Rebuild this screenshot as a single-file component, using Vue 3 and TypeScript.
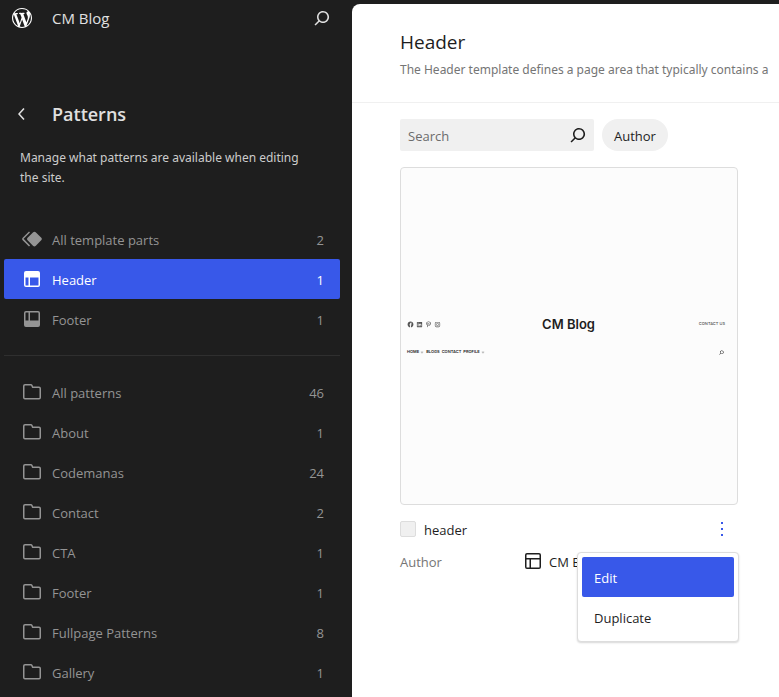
<script setup lang="ts">
import { ref } from 'vue'

interface NavItem {
  label: string
  count: number
  icon: string
  current?: boolean
}

const icons: Record<string, string> = {
  search:
    'M13 5c-3.3 0-6 2.7-6 6 0 1.4.5 2.7 1.3 3.7l-3.8 3.8 1.1 1.1 3.8-3.8c1 .8 2.3 1.3 3.7 1.3 3.3 0 6-2.7 6-6S16.3 5 13 5zm0 10.5c-2.5 0-4.5-2-4.5-4.5s2-4.5 4.5-4.5 4.5 2 4.5 4.5-2 4.5-4.5 4.5z',
  back: 'M14.6 7l-1.2-1L8 12l5.4 6 1.2-1-4.6-5z',
  symbol:
    'M21.3 10.8l-5.6-5.6c-.7-.7-1.8-.7-2.5 0l-5.6 5.6c-.7.7-.7 1.8 0 2.5l5.6 5.6c.3.3.8.5 1.2.5s.9-.2 1.2-.5l5.6-5.6c.8-.7.8-1.9.1-2.5zm-17.6 1L10 5.5l-1-1-6.3 6.3c-.7.7-.7 1.8 0 2.5L9 19.5l1.1-1.1-6.3-6.3c-.2 0-.2-.2-.1-.3z',
  header:
    'M18.5 10.5H10v8h8a.5.5 0 00.5-.5v-7.5zm-10 0h-3V18a.5.5 0 00.5.5h2.5v-8zM6 4a2 2 0 00-2 2v12a2 2 0 002 2h12a2 2 0 002-2V6a2 2 0 00-2-2H6z',
  footer:
    'M18 5.5h-8v8h8.5V6a.5.5 0 00-.5-.5zm-9.5 8h-3V6a.5.5 0 01.5-.5h2.5v8zM6 4a2 2 0 00-2 2v12a2 2 0 002 2h12a2 2 0 002-2V6a2 2 0 00-2-2H6z',
  layout:
    'M18 5.5H6a.5.5 0 00-.5.5v3h13V6a.5.5 0 00-.5-.5zm.5 5H10v8h8a.5.5 0 00.5-.5v-7.5zm-10 0h-3V18a.5.5 0 00.5.5h2.5v-8zM6 4h12a2 2 0 012 2v12a2 2 0 01-2 2H6a2 2 0 01-2-2V6a2 2 0 012-2z',
  folder:
    'M12.848 8a1 1 0 0 1-.914-.594l-.723-1.63a.5.5 0 0 0-.447-.276H5a.5.5 0 0 0-.5.5v11.5a.5.5 0 0 0 .5.5h14a.5.5 0 0 0 .5-.5v-9A.5.5 0 0 0 19 8h-6.152Zm.612-1.5a.5.5 0 0 1-.462-.31l-.445-1.084A2 2 0 0 0 10.763 4H5a2 2 0 0 0-2 2v11.5a2 2 0 0 0 2 2h14a2 2 0 0 0 2-2v-9a2 2 0 0 0-2-2h-5.54Z',
  more: 'M13 19h-2v-2h2v2zm0-6h-2v-2h2v2zm0-6h-2V5h2v2z',
}

const templateParts: NavItem[] = [
  { label: 'All template parts', count: 2, icon: 'symbol' },
  { label: 'Header', count: 1, icon: 'header', current: true },
  { label: 'Footer', count: 1, icon: 'footer' },
]

const patterns: NavItem[] = [
  { label: 'All patterns', count: 46, icon: 'folder' },
  { label: 'About', count: 1, icon: 'folder' },
  { label: 'Codemanas', count: 24, icon: 'folder' },
  { label: 'Contact', count: 2, icon: 'folder' },
  { label: 'CTA', count: 1, icon: 'folder' },
  { label: 'Footer', count: 1, icon: 'folder' },
  { label: 'Fullpage Patterns', count: 8, icon: 'folder' },
  { label: 'Gallery', count: 1, icon: 'folder' },
]

const groups = [templateParts, patterns]
const query = ref('')
const selected = ref(false)
</script>

<template>
  <div class="layout">
    <aside class="sidebar">
      <header class="site">
        <a class="icon-link" href="#" aria-label="Dashboard">
          <svg class="icon" viewBox="-2 -2 24 24">
            <path
              d="M20 10c0-5.51-4.49-10-10-10C4.48 0 0 4.49 0 10c0 5.52 4.48 10 10 10 5.51 0 10-4.48 10-10zM7.78 15.37L4.37 6.22c.55-.02 1.17-.08 1.17-.08.5-.06.44-1.13-.06-1.11 0 0-1.45.11-2.37.11-.18 0-.37 0-.58-.01C4.12 2.69 6.87 1.11 10 1.11c2.33 0 4.45.87 6.05 2.34-.68-.11-1.65.39-1.65 1.58 0 .74.45 1.36.9 2.1.35.61.55 1.36.55 2.46 0 1.49-1.4 5-1.4 5l-3.03-8.37c.54-.02.82-.17.82-.17.5-.05.44-1.25-.06-1.22 0 0-1.44.12-2.38.12-.87 0-2.33-.12-2.33-.12-.5-.03-.56 1.2-.06 1.22l.92.08 1.26 3.41zM17.41 10c.24-.64.74-1.87.43-4.25.7 1.29 1.05 2.71 1.05 4.25 0 3.29-1.73 6.24-4.4 7.78.97-2.59 1.94-5.2 2.92-7.78zM6.1 18.09C3.12 16.65 1.11 13.53 1.11 10c0-1.3.23-2.48.72-3.59C3.25 10.3 4.67 14.2 6.1 18.09zm4.03-6.63l2.58 6.98c-.86.29-1.76.45-2.71.45-.79 0-1.57-.11-2.29-.33.81-2.38 1.62-4.74 2.42-7.1z"
            />
          </svg>
        </a>
        <a class="site-name" href="#">CM Blog</a>
        <button class="icon-button" type="button" aria-label="Open command palette">
          <svg class="icon" viewBox="0 0 24 24"><path :d="icons.search" /></svg>
        </button>
      </header>

      <div class="heading">
        <button class="icon-button" type="button" aria-label="Back">
          <svg class="icon" viewBox="0 0 24 24"><path :d="icons.back" /></svg>
        </button>
        <h1>Patterns</h1>
      </div>
      <p class="intro">Manage what patterns are available when editing the site.</p>

      <nav class="nav">
        <ul v-for="(group, index) in groups" :key="index" class="group">
          <li v-for="item in group" :key="item.label">
            <a class="item" :class="{ current: item.current }" href="#">
              <svg class="icon" viewBox="0 0 24 24"><path fill-rule="evenodd" :d="icons[item.icon]" /></svg>
              <span class="item-label">{{ item.label }}</span>
              <span class="item-count">{{ item.count }}</span>
            </a>
          </li>
        </ul>
      </nav>
    </aside>

    <main class="content">
      <header class="page-head">
        <h2>Header</h2>
        <p>The Header template defines a page area that typically contains a</p>
      </header>

      <div class="tools">
        <label class="search">
          <input v-model="query" type="text" placeholder="Search" aria-label="Search" />
          <svg class="icon" viewBox="0 0 24 24"><path :d="icons.search" /></svg>
        </label>
        <button class="chip" type="button">Author</button>
      </div>

      <article class="card">
        <div class="preview">
          <div class="preview-row">
            <div class="social">
              <svg viewBox="0 0 24 24"><path d="M12 2C6.500 2 2 6.500 2 12c0 5 3.700 9.100 8.400 9.900v-7H7.900V12h2.500V9.800c0-2.500 1.500-3.900 3.800-3.900 1.100 0 2.200.2 2.200.2v2.500h-1.300c-1.200 0-1.600.8-1.600 1.600V12h2.800l-.4 2.900h-2.300v7C18.300 21.100 22 17 22 12c0-5.500-4.500-10-10-10z" /></svg>
              <svg viewBox="0 0 24 24"><path d="M19.700 3H4.300C3.600 3 3 3.600 3 4.300v15.400c0 .7.6 1.300 1.300 1.300h15.400c.7 0 1.300-.6 1.300-1.300V4.300c0-.7-.6-1.300-1.300-1.300zM8.300 18.300H5.700v-8.600h2.700v8.600zM7 8.600c-.9 0-1.600-.7-1.600-1.500 0-.9.7-1.600 1.600-1.600.9 0 1.600.7 1.600 1.600-.1.800-.8 1.500-1.600 1.500zm11.300 9.700h-2.700v-4.200c0-1 0-2.300-1.400-2.300s-1.600 1.100-1.600 2.200v4.300H10v-8.600h2.600v1.200c.4-.7 1.200-1.400 2.500-1.400 2.700 0 3.200 1.800 3.200 4.100v4.700z" /></svg>
              <svg viewBox="0 0 24 24"><path d="M12.300 2C6.800 2 4 5.700 4 9c0 1.900.7 3.600 2.300 4.200.3.100.5 0 .6-.3l.2-.9c.1-.3 0-.4-.2-.6-.5-.6-.7-1.200-.7-2.200 0-2.900 2.200-5.500 5.700-5.500 3.100 0 4.800 1.900 4.800 4.400 0 3.300-1.500 6.100-3.600 6.100-1.200 0-2.100-1-1.800-2.200.3-1.500 1-3 1-4.100 0-.9-.5-1.700-1.600-1.700-1.200 0-2.200 1.300-2.200 3 0 1.100.4 1.800.4 1.800l-1.500 6.200c-.4 1.900-.1 4.100 0 4.400 0 .1.200.2.300.1.100-.2 1.600-2 2.100-3.800l.8-3.200c.4.800 1.600 1.400 2.900 1.400 3.800 0 6.300-3.400 6.300-8C19.800 4.900 16.900 2 12.300 2z" /></svg>
              <svg viewBox="0 0 24 24"><path fill-rule="evenodd" d="M8 3h8a5 5 0 015 5v8a5 5 0 01-5 5H8a5 5 0 01-5-5V8a5 5 0 015-5zm0 2a3 3 0 00-3 3v8a3 3 0 003 3h8a3 3 0 003-3V8a3 3 0 00-3-3H8zm4 2.500a4.500 4.500 0 110 9 4.500 4.500 0 010-9zm0 1.700a2.800 2.800 0 100 5.600 2.800 2.800 0 000-5.600z" /></svg>
            </div>
            <strong class="logo">CM Blog</strong>
            <span class="contact">CONTACT US</span>
          </div>
          <div class="preview-row">
            <div class="menu">
              <span class="has-sub">HOME</span>
              <span>BLOGS</span>
              <span>CONTACT</span>
              <span class="has-sub">PROFILE</span>
            </div>
            <svg class="mini-search" viewBox="0 0 24 24"><path :d="icons.search" /></svg>
          </div>
        </div>

        <div class="card-title">
          <input id="select-header" v-model="selected" type="checkbox" />
          <label for="select-header">header</label>
          <div class="actions">
            <button class="icon-button" type="button" aria-label="Actions" aria-expanded="true">
              <svg class="icon" viewBox="0 0 24 24"><path :d="icons.more" /></svg>
            </button>
            <div class="dropdown" role="menu">
              <button class="active" type="button" role="menuitem">Edit</button>
              <button type="button" role="menuitem">Duplicate</button>
            </div>
          </div>
        </div>

        <dl class="field">
          <dt>Author</dt>
          <dd>
            <svg class="icon" viewBox="0 0 24 24"><path fill-rule="evenodd" :d="icons.layout" /></svg>
            <span>CM Blog</span>
          </dd>
        </dl>
      </article>
    </main>
  </div>
</template>

<style>
body {
  margin: 0;
  background: #1e1e1e;
}
</style>

<style scoped>
.layout {
  box-sizing: border-box;
  display: grid;
  grid-template-columns: 352px minmax(0, 1fr);
  height: 100vh;
  overflow: hidden;
  background: #1e1e1e;
  color: #1e1e1e;
  font: 13px/20px 'Open Sans', 'Noto Sans', sans-serif;
}

button,
input {
  margin: 0;
  font: inherit;
  color: inherit;
}

button {
  padding: 0;
  border: 0;
  background: none;
}

a {
  color: inherit;
  text-decoration: none;
}

h1,
h2,
p,
ul,
dl,
dd {
  margin: 0;
  padding: 0;
}

.icon {
  display: block;
  flex: none;
  width: 24px;
  height: 24px;
  fill: currentColor;
}

.sidebar {
  min-height: 0;
  overflow: hidden;
  color: #e0e0e0;
}

.site {
  display: flex;
  align-items: center;
  padding: 6px 18px 0 10px;
}

.icon-link {
  color: #fff;
}

.site-name {
  flex: 1;
  padding-left: 18px;
  font-size: 15px;
  line-height: 24px;
}

.heading {
  display: flex;
  align-items: center;
  gap: 18px;
  padding: 70px 10px 0;
}

h1 {
  font-size: 18px;
  font-weight: 600;
  line-height: 28px;
}

.intro,
.page-head p {
  font-family: 'Noto Sans', sans-serif;
  font-size: 12px;
}

.intro {
  padding: 20px 40px 0 20px;
  color: #ccc;
}

.nav {
  padding: 31px 12px 0 4px;
}

.group {
  list-style: none;
}

.group + .group {
  margin-top: 16px;
  padding-top: 16px;
  border-top: 1px solid #2f2f2f;
}

.item {
  display: flex;
  align-items: center;
  gap: 8px;
  height: 40px;
  padding: 0 16px;
  border-radius: 2px;
  color: #949494;
}

.item-label,
.item-count {
  padding-top: 2px;
}

.item-label {
  flex: 1;
}

.item.current {
  background: #3858e9;
  color: #fff;
}

.content {
  margin-top: 4px;
  overflow: hidden;
  border-top-left-radius: 8px;
  background: #fff;
}

.page-head {
  padding: 24px 0 22px 48px;
  border-bottom: 1px solid #f0f0f0;
  white-space: nowrap;
}

h2 {
  font-size: 19px;
  font-weight: 400;
  line-height: 28px;
}

.page-head p {
  padding-top: 4px;
  color: #757575;
}

.tools {
  display: flex;
  gap: 8px;
  padding: 16px 48px;
}

.search {
  display: flex;
  align-items: center;
  box-sizing: border-box;
  width: 194px;
  height: 32px;
  padding: 0 4px 0 8px;
  border-radius: 2px;
  background: #f0f0f0;
}

.search input {
  flex: 1;
  min-width: 0;
  padding: 2px 0 0;
  border: 0;
  outline: 0;
  background: transparent;
}

.search input::placeholder {
  color: #6c6c6c;
  opacity: 1;
}

.chip {
  height: 32px;
  padding: 2px 12px 0;
  border-radius: 16px;
  background: #f0f0f0;
}

.card {
  width: 338px;
  max-width: 100%;
  margin-left: 48px;
}

.preview {
  box-sizing: border-box;
  display: flex;
  flex-direction: column;
  justify-content: center;
  gap: 14px;
  aspect-ratio: 1;
  padding: 0 12px 2px 6px;
  border: 1px solid #ddd;
  border-radius: 4px;
  background: #fcfcfc;
  font: 600 4px/8px Inter, sans-serif;
}

.preview-row {
  display: grid;
  grid-template-columns: 1fr auto 1fr;
  align-items: center;
}

.social {
  display: flex;
  gap: 2px;
}

.social svg {
  width: 7px;
  height: 7px;
  fill: #555;
}

.logo {
  padding-left: 5px;
  font-size: 13px;
  font-weight: 600;
  line-height: 20px;
}

.contact {
  justify-self: end;
  color: #555;
  font-weight: 500;
}

.menu {
  display: flex;
  gap: 2px;
}

.has-sub {
  display: flex;
  align-items: center;
  gap: 1px;
}

.has-sub::after {
  width: 1px;
  height: 1px;
  margin: 0 1px;
  border: solid #bbb;
  border-width: 0 1px 1px 0;
  content: '';
  transform: rotate(45deg);
}

.mini-search {
  grid-column: 3;
  justify-self: end;
  width: 7px;
  height: 7px;
}

.card-title {
  display: flex;
  align-items: center;
  gap: 8px;
  height: 24px;
  padding-top: 12px;
}

.card-title label {
  padding-top: 2px;
}

.card-title input {
  appearance: none;
  box-sizing: border-box;
  width: 16px;
  height: 16px;
  border: 1px solid #ddd;
  border-radius: 2px;
  background: #f0f0f0;
}

.actions {
  position: relative;
  display: flex;
  margin-left: auto;
  padding-right: 4px;
  color: #3858e9;
}

.dropdown {
  position: absolute;
  top: 35px;
  right: -1px;
  box-sizing: border-box;
  width: 162px;
  padding: 4px;
  border: 1px solid #ddd;
  border-radius: 4px;
  background: #fff;
  box-shadow: 0 1px 2px rgba(0, 0, 0, 0.16);
  color: #1e1e1e;
}

.dropdown button {
  display: block;
  width: 100%;
  height: 40px;
  padding: 2px 12px 0;
  border-radius: 2px;
  text-align: left;
}

.dropdown .active {
  background: #3858e9;
  color: #fff;
}

.field {
  display: grid;
  grid-template-columns: 121px 1fr;
  align-items: center;
  padding-top: 8px;
}

.field dt {
  padding-top: 2px;
  color: #757575;
}

.field dd {
  display: flex;
  align-items: center;
  gap: 4px;
}

.field dd span {
  padding-top: 2px;
}
</style>
